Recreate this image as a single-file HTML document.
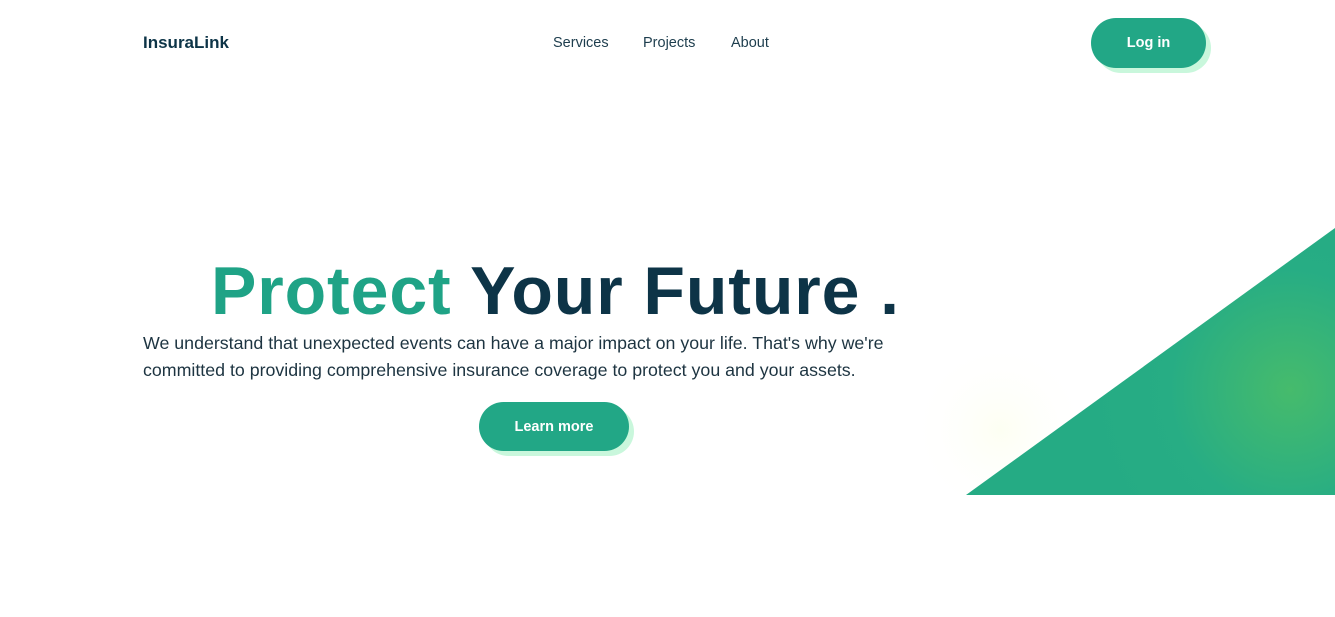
<!DOCTYPE html>
<html><head><style>
*{margin:0;padding:0;box-sizing:border-box}
body{width:1335px;height:617px;background:#fff;font-family:"Liberation Sans",sans-serif;position:relative;overflow:hidden;color:#0f3a4a}
.logo{position:absolute;left:143px;top:33px;font-size:17px;font-weight:bold;color:#0d3447}
.nav{position:absolute;top:35px;font-size:14.5px;color:#1d3d4d}
.btn{position:absolute;background:#22a786;color:#fff;font-weight:bold;border-radius:30px;display:flex;align-items:center;justify-content:center;box-shadow:5px 5px 0 #c9f7dc}
h1{position:absolute;left:211px;top:252px;font-size:68px;font-weight:bold;white-space:nowrap;color:#0d3447;letter-spacing:0.9px}
h1 span{color:#1fa386}
p{position:absolute;left:143px;top:330px;font-size:17.8px;line-height:27px;color:#1d3441;width:800px}
</style></head><body>
<div class="logo">InsuraLink</div>
<div class="nav" style="left:553px">Services</div>
<div class="nav" style="left:643px">Projects</div>
<div class="nav" style="left:731px">About</div>
<div class="btn" style="left:1091px;top:18px;width:115px;height:50px;font-size:14.5px">Log in</div>
<h1><span>Protect</span> Your Future .</h1>
<p>We understand that unexpected events can have a major impact on your life. That's why we're committed to providing comprehensive insurance coverage to protect you and your assets.</p>
<div class="btn" style="left:479px;top:402px;width:150px;height:49px;font-size:14.5px">Learn more</div>
<svg style="position:absolute;left:0;top:0" width="1335" height="617">
<defs>
<radialGradient id="g" cx="1290" cy="390" r="200" gradientUnits="userSpaceOnUse">
<stop offset="0" stop-color="#46bb6c"/><stop offset="0.6" stop-color="#27ad84"/><stop offset="1" stop-color="#25ab84"/></radialGradient>
<radialGradient id="w" cx="1000" cy="430" r="90" gradientUnits="userSpaceOnUse">
<stop offset="0" stop-color="#fdfff2"/><stop offset="1" stop-color="#ffffff" stop-opacity="0"/></radialGradient>
</defs>
<rect x="900" y="330" width="200" height="165" fill="url(#w)"/>
<polygon points="966,495 1335,228 1335,495" fill="url(#g)"/>
</svg>
</body></html>
